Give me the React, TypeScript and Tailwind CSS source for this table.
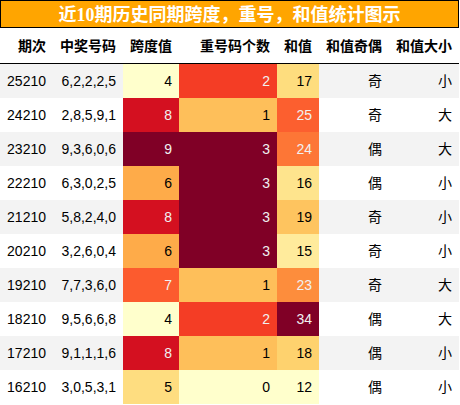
import React from "react";

type Row = [string, string, number, number, number, string, string];

const rows: Row[] = [
  ["25210", "6,2,2,2,5", 4, 2, 17, "奇", "小"],
  ["24210", "2,8,5,9,1", 8, 1, 25, "奇", "大"],
  ["23210", "9,3,6,0,6", 9, 3, 24, "偶", "大"],
  ["22210", "6,3,0,2,5", 6, 3, 16, "偶", "小"],
  ["21210", "5,8,2,4,0", 8, 3, 19, "奇", "小"],
  ["20210", "3,2,6,0,4", 6, 3, 15, "奇", "小"],
  ["19210", "7,7,3,6,0", 7, 1, 23, "奇", "大"],
  ["18210", "9,5,6,6,8", 4, 2, 34, "偶", "大"],
  ["17210", "9,1,1,1,6", 8, 1, 18, "偶", "小"],
  ["16210", "3,0,5,3,1", 5, 0, 12, "偶", "小"],
];

const spanCls: Record<number, string> = {
  4: "bg-[#ffffcc] text-[#000000]",
  5: "bg-[#fedd80] text-[#000000]",
  6: "bg-[#feab49] text-[#000000]",
  7: "bg-[#fc5b2e] text-[#f1f1f1]",
  8: "bg-[#d41020] text-[#f1f1f1]",
  9: "bg-[#800026] text-[#f1f1f1]",
};

const repCls: Record<number, string> = {
  0: "bg-[#ffffcc] text-[#000000]",
  1: "bg-[#febf5a] text-[#000000]",
  2: "bg-[#f43d25] text-[#f1f1f1]",
  3: "bg-[#800026] text-[#f1f1f1]",
};

const sumCls: Record<number, string> = {
  12: "bg-[#ffffcc] text-[#000000]",
  15: "bg-[#ffeb9c] text-[#000000]",
  16: "bg-[#fee48d] text-[#000000]",
  17: "bg-[#fedd7e] text-[#000000]",
  18: "bg-[#fed26e] text-[#000000]",
  19: "bg-[#fec45f] text-[#000000]",
  23: "bg-[#fd8d3c] text-[#f1f1f1]",
  24: "bg-[#fd7636] text-[#f1f1f1]",
  25: "bg-[#fc5f2f] text-[#f1f1f1]",
  34: "bg-[#800026] text-[#f1f1f1]",
};

const headers = ["期次", "中奖号码", "跨度值", "重号码个数", "和值", "和值奇偶", "和值大小"];

const cell = "flex items-center justify-end pr-[7px]";

export default function App() {
  return (
    <div className="w-[460px] h-[405px] bg-white overflow-hidden">
      <div className="w-[459px]">
        <div className="h-[28px] bg-[#ffa500] border border-black flex items-center justify-center text-white font-bold text-[18px] leading-none font-['Noto_Sans_CJK_SC',sans-serif] whitespace-nowrap">
          <span>
            近<span className="font-['Liberation_Serif',serif]">10</span>期历史同期跨度，重号，和值统计图示
          </span>
        </div>
        <div className="grid grid-cols-[53px_70px_56px_98px_42px_70px_70px] h-[36px] border-b border-black font-bold text-[14px] text-black font-['Noto_Sans_CJK_SC',sans-serif]">
          {headers.map((h) => (
            <div key={h} className={cell}>
              {h}
            </div>
          ))}
        </div>
        <div className="text-[14px] font-['Liberation_Sans','Noto_Sans_CJK_SC',sans-serif] text-[#000000]">
          {rows.map((r, i) => (
            <div
              key={r[0]}
              className={`grid grid-cols-[53px_70px_56px_98px_42px_70px_70px] h-[34px] ${
                i % 2 === 0 ? "bg-[#f3f3f3]" : "bg-white"
              }`}
            >
              <div className={cell}>{r[0]}</div>
              <div className={cell}>{r[1]}</div>
              <div className={`${cell} ${spanCls[r[2]]}`}>{r[2]}</div>
              <div className={`${cell} ${repCls[r[3]]}`}>{r[3]}</div>
              <div className={`${cell} ${sumCls[r[4]]}`}>{r[4]}</div>
              <div className={cell}>{r[5]}</div>
              <div className={cell}>{r[6]}</div>
            </div>
          ))}
        </div>
      </div>
    </div>
  );
}
